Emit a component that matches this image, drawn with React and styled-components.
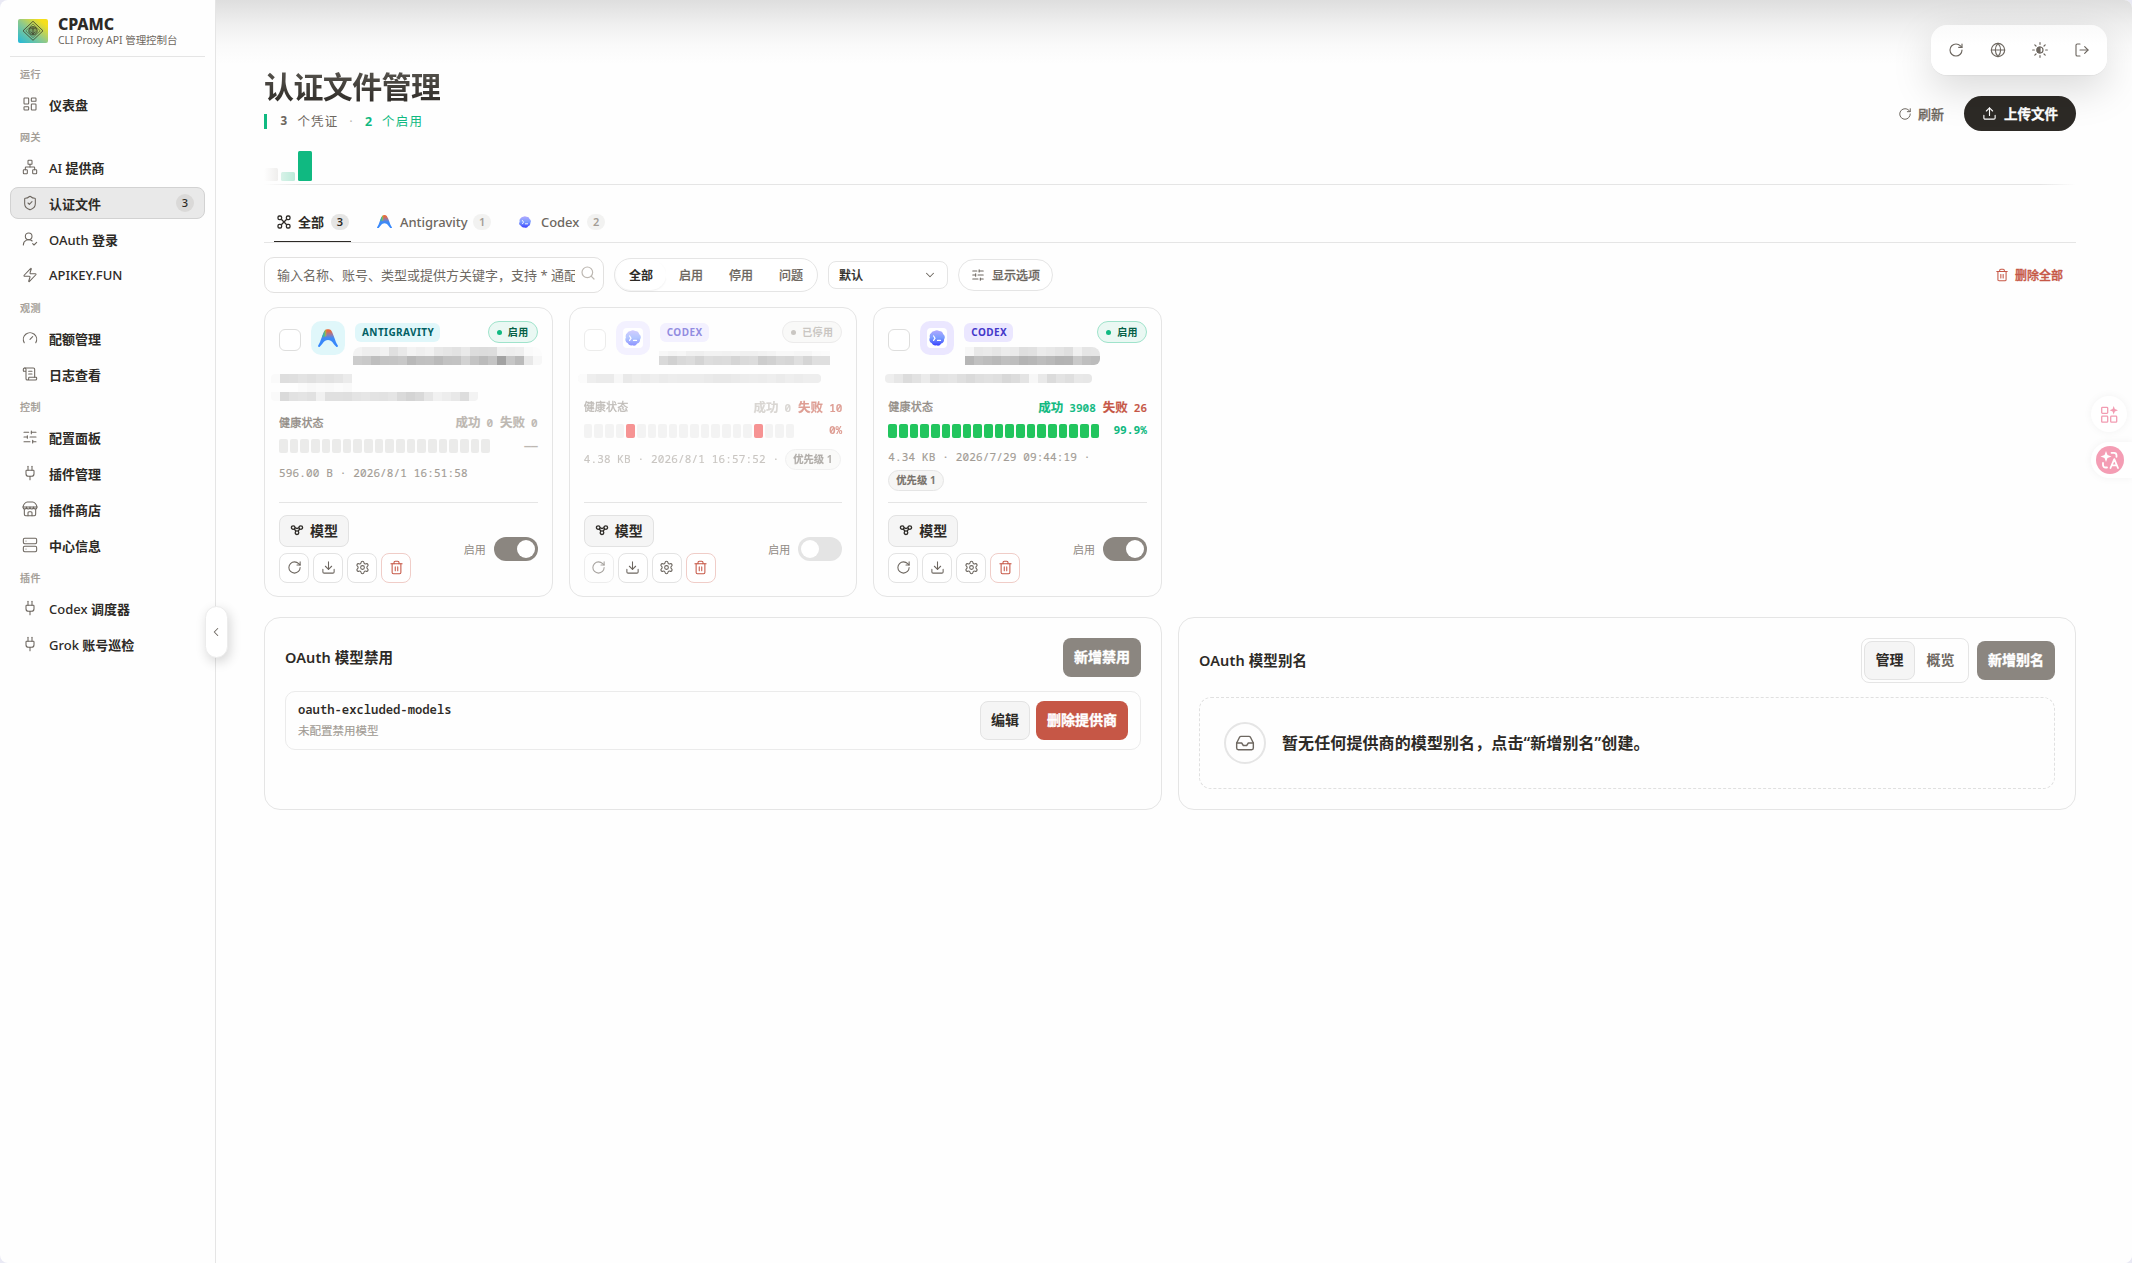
import React, { useState } from 'react';
import styled, { createGlobalStyle, css } from 'styled-components';
import {
    LayoutDashboard, Network, ShieldCheck, UserRoundCheck, Zap, Gauge, ScrollText, SlidersHorizontal,
    Plug, Server, RotateCw, Globe, LogOut, Upload, Download, Settings, Trash2, Search,
    ChevronDown, ChevronLeft, Inbox,
} from 'lucide-react';

const sans = `'Noto Sans', 'Noto Sans CJK SC', sans-serif`;
const mono = `'Noto Sans Mono', 'Noto Sans Mono CJK SC', 'DejaVu Sans Mono', 'Noto Sans CJK SC', monospace`;

const ink = '#2d2a26';
const muted = '#6d6760';
const faint = '#a29c95';
const line = '#e5e5e5';
const green = '#10b981';
const red = '#c65746';

const GlobalStyle = createGlobalStyle`
    * { box-sizing: border-box; }
    body {
        margin: 0;
        background: #e9e9f4;
        color: ${ink};
        font-family: ${sans};
        font-size: 13px;
    }
    button { font-family: inherit; cursor: pointer; margin: 0; }
    svg { display: block; flex-shrink: 0; }
`;

/* ---------- icons ---------- */

const StoreIcon = ({ size = 16 }) => (
    <svg width={size} height={size} viewBox="0 0 24 24" fill="none" stroke="currentColor" strokeWidth="1.6" strokeLinecap="round" strokeLinejoin="round">
        <path d="M1.500 9C2 5 5.500 1.500 8 1.500h8c2.500 0 6 3.500 6.500 7.500z" />
        <path d="M1.500 9c0 4 5.250 4 5.250 0 0 4 5.250 4 5.250 0 0 4 5.250 4 5.250 0 0 4 5.250 4 5.250 0" />
        <path d="M3.500 12.500V20a2 2 0 0 0 2 2h13a2 2 0 0 0 2-2v-7.500" />
        <path d="M9 22v-4.500a1.500 1.500 0 0 1 1.500-1.500h3a1.500 1.500 0 0 1 1.500 1.500V22" />
    </svg>
);

const HalfSunIcon = ({ size = 16 }) => (
    <svg width={size} height={size} viewBox="0 0 24 24" fill="none" stroke="currentColor" strokeWidth="1.8" strokeLinecap="round">
        <circle cx="12" cy="12" r="4.500" />
        <path d="M12 7.500a4.500 4.500 0 0 0 0 9z" fill="currentColor" />
        <path d="M12 1v2.500M12 20.500V23M1 12h2.500M20.500 12H23M4.200 4.200 6 6M18 18l1.800 1.800M4.200 19.800 6 18M18 6l1.800-1.800" />
    </svg>
);

const AllIcon = () => (
    <svg width="14" height="14" viewBox="0 0 14 14" fill="none" stroke="currentColor" strokeWidth="1.300">
        <rect x="1" y="1" width="3.600" height="3.600" rx="1.300" />
        <rect x="9.400" y="1" width="3.600" height="3.600" rx="1.300" />
        <rect x="1" y="9.400" width="3.600" height="3.600" rx="1.300" />
        <rect x="9.400" y="9.400" width="3.600" height="3.600" rx="1.300" />
        <path d="M4.300 4.300 9.700 9.700M9.700 4.300 4.300 9.700" />
    </svg>
);

const ModelIcon = () => (
    <svg width="14" height="14" viewBox="0 0 14 14" fill="none" stroke="currentColor" strokeWidth="1.300">
        <circle cx="3.200" cy="4.600" r="1.800" />
        <circle cx="10.800" cy="4.600" r="1.800" />
        <circle cx="7" cy="9.700" r="1.800" />
        <path d="M5 4.600 7 5.500 9 4.600M4.300 6l1.600 2.200M9.700 6 8.100 8.200" />
    </svg>
);

const AntigravityIcon = ({ width = 20 }) => (
    <svg width={width} height={width * 0.92} viewBox="0 0 20 18.400">
        <defs>
            <linearGradient id="agBase" x1="0" y1="0" x2="0" y2="1">
                <stop offset="0.100" stopColor="#e8683f" />
                <stop offset="0.330" stopColor="#8b7bb0" />
                <stop offset="0.500" stopColor="#3f8af5" />
                <stop offset="1" stopColor="#3186ff" />
            </linearGradient>
            <linearGradient id="agSide" x1="0.150" y1="0.300" x2="0.550" y2="0.300">
                <stop offset="0.200" stopColor="#35b4b0" />
                <stop offset="0.550" stopColor="#8bc34a" stopOpacity="0.900" />
                <stop offset="1" stopColor="#f5a623" stopOpacity="0" />
            </linearGradient>
        </defs>
        <path fill="url(#agBase)" d="M7 1.200C8.200-.2 11.800-.2 13 1.200c2.800 3.900 4 11 6.800 15.300.5.900-.6 2-1.500 1.300-2.800-2.200-4-6.800-8.300-6.800s-5.500 4.600-8.300 6.800c-.9.700-2-.4-1.500-1.300C3 12.200 4.200 5.100 7 1.200z" />
        <path fill="url(#agSide)" d="M7 1.200C8.200-.2 11.800-.2 13 1.200l-.5 5L4 8.200c.8-2.700 1.700-5.200 3-7z" />
    </svg>
);

const CodexIcon = ({ size = 16 }) => (
    <svg width={size} height={size} viewBox="0 0 16 16">
        <defs>
            <linearGradient id="cxFill" x1="0" y1="0" x2="0" y2="1">
                <stop offset="0" stopColor="#b1a7ff" />
                <stop offset="0.500" stopColor="#7a9dff" />
                <stop offset="1" stopColor="#3941ff" />
            </linearGradient>
        </defs>
        <path fill="url(#cxFill)" d="M5.500 1.100a4 4 0 0 1 4.600-.2 4 4 0 0 1 4 3.100 4 4 0 0 1 1 5.300 4 4 0 0 1-2.900 4.200 4 4 0 0 1-5 1.800 4 4 0 0 1-4.600-2.200A4 4 0 0 1 .9 7.500a4 4 0 0 1 1.300-4.400 4 4 0 0 1 3.300-2z" />
        <path d="M4.600 6 6 8.200l-1.400 2.200M8.500 10.400h3" stroke="#fff" strokeWidth="1.200" strokeLinecap="round" fill="none" />
    </svg>
);

const LogoMark = () => (
    <svg width="30" height="24" viewBox="0 0 30 24">
        <defs>
            <linearGradient id="logoBg" x1="0" y1="1" x2="1" y2="0">
                <stop offset="0" stopColor="#1fb8dc" />
                <stop offset="0.480" stopColor="#8fc98a" />
                <stop offset="0.850" stopColor="#f5df1c" />
            </linearGradient>
        </defs>
        <rect width="30" height="24" rx="2" fill="url(#logoBg)" />
        <g fill="none" stroke="#3a3a22" strokeWidth="0.800">
            <path d="M15 2.300 25 11.800 15 21.300 5 11.800z" />
            <path d="M15 5 22.200 11.800 15 18.600 7.800 11.800z" strokeWidth="0.500" />
            <circle cx="15" cy="11.800" r="4.200" fill="#3a3a22" fillOpacity="0.300" />
            <path d="M12 10.300c1-1.500 2-1.500 3 0 1-1.500 2-1.500 3 0M12.500 12.800l2.500 2 2.500-2M15 8v8" strokeWidth="0.700" />
        </g>
    </svg>
);

/* ---------- sidebar ---------- */

const Shell = styled.div`
    position: relative;
    display: flex;
    width: 100%;
    height: 1263px;
    overflow: hidden;
    background: #fefefe;
    border-radius: 8px;
`;

const Sidebar = styled.aside`
    flex: 0 0 216px;
    padding: 0 10px;
    border-right: 1px solid ${line};
`;

const Brand = styled.div`
    display: flex;
    align-items: center;
    gap: 10px;
    height: 57px;
    margin-bottom: 1px;
    padding: 6px 8px 0;
    border-bottom: 1px solid ${line};
`;

const BrandName = styled.div`
    font-size: 16px;
    font-weight: 800;
    line-height: 17px;
    letter-spacing: -0.1px;
`;

const BrandSub = styled.div`
    font-size: 10.5px;
    line-height: 14px;
    letter-spacing: -0.060px;
    color: ${muted};
    white-space: nowrap;
`;

const GroupLabel = styled.div`
    display: flex;
    align-items: center;
    height: 31px;
    padding-left: 10px;
    font-size: 10px;
    font-weight: 500;
    letter-spacing: 0.5px;
    color: ${faint};
    -webkit-text-stroke: 0.2px;
`;

const NavList = styled.nav`
    display: flex;
    flex-direction: column;
    gap: 4px;
    margin: -1px 0 1px;
`;

const NavItem = styled.a`
    display: flex;
    align-items: center;
    height: 32px;
    padding: 0 10px 0 11px;
    border: 1px solid transparent;
    border-radius: 8px;
    font-weight: 500;
    svg { margin-right: 11px; color: ${muted}; }
    ${p => p.$active && css`
        background: #e9e9e9;
        border-color: #d2d2d2;
    `}
`;

const Han = styled.span`
    font-weight: 700;
`;

const NavCount = styled.span`
    width: 18px;
    height: 18px;
    margin-left: auto;
    border-radius: 9px;
    background: #dad9d8;
    font-size: 11px;
    line-height: 18px;
    text-align: center;
`;

const CollapseHandle = styled.button`
    position: absolute;
    left: 205px;
    top: 606px;
    width: 23px;
    height: 52px;
    display: grid;
    place-items: center;
    padding: 0 2px 0 0;
    border: 1px solid #ececec;
    border-radius: 12px;
    background: #fff;
    color: ${muted};
    box-shadow: 2px 4px 12px rgba(0, 0, 0, 0.16);
    z-index: 2;
`;

/* ---------- page header ---------- */

const Main = styled.main`
    flex: 1;
    min-width: 0;
    padding: 70px 56px 0 48px;
    background: linear-gradient(180deg, #dedede 0, #efefef 24px, #fafafa 46px, #fefefe 64px);
`;

const PageHead = styled.header`
    position: relative;
    display: flex;
    justify-content: space-between;
    height: 115px;
    &::after {
        content: '';
        position: absolute;
        left: 0;
        right: 0;
        bottom: 0;
        height: 1px;
        background: linear-gradient(90deg, transparent, ${line} 2%, ${line} 98%, transparent);
    }
`;

const Title = styled.h1`
    margin: -1px 0 0;
    font-size: 30px;
    font-weight: 700;
    line-height: 36px;
    letter-spacing: -0.6px;
    background: linear-gradient(180deg, #58554f, #2d2a26);
    -webkit-background-clip: text;
    color: transparent;
`;

const Summary = styled.div`
    display: flex;
    align-items: center;
    height: 15px;
    margin-top: 9px;
    padding: 0 0 2px 13px;
    border-left: 3px solid ${green};
    font-family: ${mono};
    font-size: 12.5px;
    letter-spacing: 1.200px;
    color: ${muted};
    white-space: pre;
    b { font-weight: 700; }
`;

const SummaryOn = styled.span`
    color: ${green};
`;

const Dot = styled.span`
    color: #bdb8b2;
`;

const MiniBars = styled.div`
    display: flex;
    align-items: flex-end;
    gap: 3px;
    height: 30px;
    margin-top: 22px;
`;

const MiniBar = styled.i`
    width: 14px;
    height: ${p => p.$h}px;
    border-radius: 1.500px;
    background: ${p => p.$bg};
`;

const HeadActions = styled.div`
    display: flex;
    align-items: center;
    gap: 20px;
    height: 35px;
    margin-top: 26px;
`;

const RefreshLink = styled.button`
    display: flex;
    align-items: center;
    gap: 6px;
    padding: 0;
    border: 0;
    background: none;
    font-size: 13px;
    font-weight: 500;
    color: ${muted};
    -webkit-text-stroke: 0.25px;
`;

const UploadButton = styled.button`
    display: flex;
    align-items: center;
    justify-content: center;
    gap: 7px;
    width: 112px;
    height: 35px;
    padding: 0 0 1px;
    border: 0;
    border-radius: 18px;
    background: ${ink};
    color: #fff;
    font-size: 13.500px;
    font-weight: 700;
    -webkit-text-stroke: 0.3px;
`;

const FloatBar = styled.div`
    position: absolute;
    top: 25px;
    right: 25px;
    display: flex;
    align-items: center;
    justify-content: space-between;
    width: 176px;
    height: 50px;
    padding: 0 17px;
    border-radius: 16px;
    background: linear-gradient(180deg, #fafafa, #fff 40%);
    color: ${muted};
    box-shadow: 0 14px 40px rgba(0, 0, 0, 0.15), 0 1px 1px rgba(0, 0, 0, 0.04);
`;

/* ---------- tabs and filters ---------- */

const Tabs = styled.div`
    display: flex;
    height: 58px;
    padding: 17px 10px 0;
    border-bottom: 1px solid ${line};
`;

const Tab = styled.button`
    display: flex;
    align-items: center;
    width: ${p => p.$w}px;
    height: 40px;
    margin-right: 23px;
    padding: 0 2px 0 3px;
    border: 0;
    border-bottom: 1px solid ${p => p.$active ? ink : 'transparent'};
    background: none;
    color: ${p => p.$active ? ink : muted};
    font-size: 13px;
    font-weight: ${p => p.$active ? 700 : 500};
    letter-spacing: ${p => p.$active ? 0 : '-0.05px'};
    svg { margin-right: ${p => p.$gap}px; }
`;

const TabCount = styled.span`
    width: 18px;
    height: 16px;
    margin-left: auto;
    border-radius: 8px;
    background: ${p => p.$active ? '#e5e5e4' : '#f2f2f1'};
    color: ${p => p.$active ? ink : faint};
    font-size: 11px;
    font-weight: 600;
    line-height: 16px;
    text-align: center;
`;

const Filters = styled.div`
    display: flex;
    align-items: center;
    gap: 10px;
    height: 36px;
    margin: 14px 0;
`;

const SearchBox = styled.label`
    display: flex;
    align-items: center;
    width: 340px;
    height: 36px;
    padding: 0 7px 0 12px;
    border: 1px solid #e2e1e0;
    border-radius: 10px;
    background: #fff;
    color: #bdb8b2;
    svg { margin: -4px 0 0 5px; }
`;

const SearchInput = styled.input`
    flex: 1;
    min-width: 0;
    padding: 0;
    border: 0;
    outline: 0;
    background: none;
    font-family: ${sans};
    font-size: 13px;
    &::placeholder { color: #6f6a64; }
`;

const Segment = styled.div`
    display: flex;
    width: 204px;
    height: 34px;
    padding: 1px;
    border: 1px solid ${line};
    border-radius: 17px;
    background: #fff;
`;

const SegmentItem = styled.button`
    flex: 1;
    padding: 0 0 1px;
    border: 0;
    border-radius: 15px;
    background: #fff;
    color: ${p => p.$active ? ink : muted};
    font-size: 12px;
    font-weight: ${p => p.$active ? 700 : 500};
    -webkit-text-stroke: ${p => p.$active ? 0 : 0.2}px;
    ${p => p.$active && css`box-shadow: 0 1px 2px rgba(0, 0, 0, 0.06);`}
`;

const SortSelect = styled.button`
    display: flex;
    align-items: center;
    justify-content: space-between;
    width: 120px;
    height: 28px;
    padding: 0 10px;
    border: 1px solid ${line};
    border-radius: 8px;
    background: #fff;
    color: ${ink};
    font-size: 12px;
    font-weight: 500;
    -webkit-text-stroke: 0.2px;
    svg { color: ${muted}; }
`;

const OptionsButton = styled.button`
    display: flex;
    align-items: center;
    justify-content: center;
    gap: 7px;
    width: 95px;
    height: 32px;
    padding: 0;
    border: 1px solid ${line};
    border-radius: 16px;
    background: #fff;
    color: ${muted};
    font-size: 12px;
    font-weight: 500;
    -webkit-text-stroke: 0.25px;
`;

const DeleteAll = styled.button`
    display: flex;
    align-items: center;
    gap: 6px;
    margin-left: auto;
    padding: 0 13px 0 0;
    border: 0;
    background: none;
    color: ${red};
    font-size: 12px;
    font-weight: 500;
    -webkit-text-stroke: 0.35px;
`;

/* ---------- credential cards ---------- */

const CardGrid = styled.section`
    display: grid;
    grid-template-columns: repeat(6, minmax(0, 1fr));
    gap: 16px;
`;

const Card = styled.article`
    display: flex;
    flex-direction: column;
    height: 290px;
    padding: 13px 14px;
    border: 1px solid ${line};
    border-radius: 14px;
    background: #fefefe;
`;

const Fade = styled.div`
    opacity: ${p => p.$off ? 0.58 : 1};
`;

const CardTop = styled.div`
    display: flex;
    height: 53px;
`;

const CheckBox = styled.span`
    width: 22px;
    height: 22px;
    margin: 8px 10px 0 0;
    border: 1px solid #dededd;
    border-radius: 6px;
    background: #fff;
`;

const Avatar = styled.span`
    display: grid;
    place-items: center;
    width: 34px;
    height: 34px;
    margin-right: 10px;
    border-radius: 10px;
    background: ${p => p.$bg};
`;

const AvatarInner = styled.span`
    display: grid;
    place-items: center;
    width: 20px;
    height: 20px;
    border-radius: 4px;
    background: #fff;
`;

const CardIdent = styled.div`
    flex: 1;
    min-width: 0;
`;

const BadgeRow = styled.div`
    display: flex;
    align-items: center;
    justify-content: space-between;
    height: 22px;
    margin-bottom: 4px;
`;

const TypeBadge = styled.span`
    height: 19px;
    padding: 0 6px 0 7px;
    border-radius: 6px;
    background: ${p => p.$bg};
    color: ${p => p.$fg};
    font-size: 10px;
    font-weight: 700;
    line-height: 19px;
    letter-spacing: 0.430px;
`;

const StatusPill = styled.span`
    display: flex;
    align-items: center;
    gap: 6px;
    height: 22px;
    padding: 0 8px 1px;
    border: 1px solid ${p => p.$on ? '#9fe3cb' : '#dedddc'};
    border-radius: 11px;
    background: ${p => p.$on ? '#eaf8f3' : '#f4f4f3'};
    color: ${p => p.$on ? '#065f46' : faint};
    font-size: 10px;
    font-weight: 700;
    letter-spacing: 0.400px;
    &::before {
        content: '';
        width: 5px;
        height: 5px;
        margin-top: 1px;
        border-radius: 50%;
        background: ${p => p.$on ? green : faint};
    }
`;

const FileLines = styled.div`
    height: ${p => p.$h}px;
    margin-left: ${p => p.$shift}px;
`;

const MaskSvg = styled.svg`
    border-radius: ${p => p.$round};
    overflow: hidden;
`;

const HealthRow = styled.div`
    display: flex;
    align-items: center;
    justify-content: space-between;
    height: 18px;
    margin-bottom: 7.500px;
    padding-bottom: 2px;
    font-family: ${mono};
    font-size: 11px;
    white-space: pre;
`;

const HealthLabel = styled.span`
    color: #918b84;
    font-weight: 500;
    letter-spacing: 0.200px;
    -webkit-text-stroke: 0.3px;
`;

const Stat = styled.span`
    margin-left: 7px;
    color: ${p => p.$color};
    font-weight: 600;
    -webkit-text-stroke: 0.15px;
    span { font-family: ${sans}; font-size: 12.500px; margin-right: 6px; }
`;

const BarsRow = styled.div`
    display: grid;
    grid-template-columns: 1fr 48px;
    align-items: center;
    height: 14px;
`;

const Bars = styled.div`
    display: flex;
    gap: 2px;
    height: 14px;
`;

const Bar = styled.i`
    flex: 1;
    border-radius: 2px;
    background: ${p => p.$color};
`;

const Rate = styled.span`
    margin-top: -2px;
    font-family: ${mono};
    font-size: 11.200px;
    font-weight: 700;
    line-height: 14px;
    text-align: right;
    color: ${p => p.$color};
`;

const Meta = styled.div`
    display: flex;
    flex-wrap: wrap;
    align-items: center;
    gap: 5px 6px;
    margin-top: ${p => p.$single ? 12 : 11}px;
    font-family: ${mono};
    font-size: 11px;
    line-height: 16px;
    letter-spacing: 0.140px;
    color: ${faint};
    white-space: nowrap;
    -webkit-text-stroke: 0.15px;
`;

const Priority = styled.span`
    height: 21px;
    padding: 0 7px;
    border: 1px solid ${line};
    border-radius: 11px;
    background: #f6f6f5;
    color: #78726b;
    font-family: ${sans};
    font-size: 10.300px;
    font-weight: 600;
    line-height: 18px;
    letter-spacing: 0;
`;

const CardFoot = styled.div`
    display: flex;
    align-items: center;
    justify-content: space-between;
    margin-top: auto;
    padding-top: 12px;
    border-top: 1px solid ${line};
`;

const ModelButton = styled.button`
    display: flex;
    align-items: center;
    justify-content: center;
    gap: 6px;
    width: 70px;
    height: 32px;
    margin-bottom: 6px;
    padding: 0 0 2px;
    border: 1px solid #e2e2e2;
    border-radius: 8px;
    background: #f5f5f5;
    color: ${ink};
    font-size: 14px;
    font-weight: 700;
`;

const IconRow = styled.div`
    display: flex;
    gap: 4px;
`;

const IconButton = styled.button`
    display: grid;
    place-items: center;
    width: 30px;
    height: 30px;
    padding: 0 0 1px;
    border: 1px solid ${p => p.$danger ? '#f0cdc8' : '#e3e3e3'};
    border-radius: 8px;
    background: #fff;
    color: ${p => p.$danger ? red : muted};
    opacity: ${p => p.disabled ? 0.6 : 1};
`;

const SwitchLabel = styled.div`
    display: flex;
    align-items: center;
    color: #918b84;
    font-size: 11px;
    span:first-child { padding: 0 8px 1px 0; }
`;

const Switch = styled.span`
    display: flex;
    justify-content: ${p => p.$on ? 'flex-end' : 'flex-start'};
    width: 44px;
    height: 24px;
    padding: 3px;
    border-radius: 12px;
    background: ${p => p.$on ? '#8b8680' : '#e4e4e4'};
    &::after {
        content: '';
        width: 18px;
        height: 18px;
        border-radius: 50%;
        background: #fff;
    }
`;

/* ---------- oauth panels ---------- */

const Panels = styled.section`
    display: grid;
    grid-template-columns: 1fr 1fr;
    gap: 16px;
    margin-top: 20px;
`;

const Panel = styled.div`
    height: 193px;
    padding: 20px;
    border: 1px solid ${line};
    border-radius: 16px;
`;

const PanelHead = styled.div`
    display: flex;
    align-items: center;
    gap: 8px;
    height: ${p => p.$h}px;
    margin-bottom: 14px;
    h2 {
        flex: 1;
        margin: -2px 0 0;
        font-size: 14.500px;
        font-weight: 600;
        letter-spacing: 0.120px;
    }
`;

const solid = css`
    border-color: transparent;
    color: #fff;
    -webkit-text-stroke: 0.35px;
`;

const Button = styled.button`
    height: 39px;
    padding: 0 10px 1px;
    border: 1px solid #e3e3e3;
    border-radius: 8px;
    background: #f5f5f5;
    background-origin: border-box;
    color: ${ink};
    font-size: 14px;
    font-weight: 600;
    line-height: 20px;
    white-space: nowrap;
    ${p => p.$kind === 'primary' && css`${solid} background: #8b8680;`}
    ${p => p.$kind === 'danger' && css`${solid} background: ${red};`}
    ${p => p.$kind === 'ghost' && css`border-color: transparent; background: none; color: ${muted};`}
`;

const ExcludedRow = styled.div`
    display: flex;
    align-items: center;
    gap: 6px;
    height: 59px;
    padding: 0 12px;
    border: 1px solid #ebebeb;
    border-radius: 10px;
`;

const ExcludedText = styled.div`
    flex: 1;
    margin-top: -2px;
    strong {
        display: block;
        font-family: ${mono};
        font-size: 12.200px;
        font-weight: 600;
        line-height: 18px;
        margin-bottom: 4px;
    }
    span {
        display: block;
        color: ${faint};
        font-size: 11.500px;
        line-height: 16px;
        -webkit-text-stroke: 0.15px;
    }
`;

const ViewSwitch = styled.div`
    display: flex;
    width: 108px;
    height: 45px;
    padding: 2px;
    border: 1px solid ${line};
    border-radius: 8px;
    button { flex: 1; padding: 0 0 1px; }
`;

const EmptyBox = styled.div`
    display: flex;
    align-items: center;
    gap: 16px;
    height: 92px;
    padding-left: 24px;
    border: 1px dashed #e0e0e0;
    border-radius: 12px;
    font-size: 16px;
    font-weight: 600;
    letter-spacing: 0.1px;
    p { margin: -2px 0 0; }
`;

const EmptyIcon = styled.span`
    display: grid;
    place-items: center;
    width: 42px;
    height: 42px;
    border: 2px solid #e5e5e5;
    border-radius: 50%;
    color: ${muted};
`;

/* ---------- right edge helpers ---------- */

const EdgeTools = styled.div`
    position: absolute;
    top: 396px;
    right: 0;
    display: flex;
    flex-direction: column;
    gap: 10px;
    width: 41px;
`;

const EdgeBubble = styled.span`
    display: flex;
    align-items: center;
    width: ${p => p.$w}px;
    height: 36px;
    padding-left: ${p => p.$pl}px;
    border-radius: ${p => p.$round};
    background: #fff;
    box-shadow: 0 0 8px rgba(0, 0, 0, 0.05);
`;

/* masked account text, one grey level per 9px cell */
const Mask = ({ rows, clip = 0, round = '0' }) => {
    const cols = Math.max(...rows.map(row => row.split(' ').length));
    return (
        <MaskSvg width={cols * 9} height={rows.length * 9} $round={round} shapeRendering="crispEdges">
            {rows.map((row, y) => row.split(' ').map((v, x) => {
                const cut = y === 0 ? clip : 0;
                if (v === '..') return null;
                return <rect key={`${x}-${y}`} x={x * 9} y={y * 9 + cut} width="9" height={9 - cut} fill={`#${v}${v}${v}`} />;
            }))}
        </MaskSvg>
    );
};

const navGroups = [
    { label: '运行', items: [{ icon: LayoutDashboard, han: '仪表盘' }] },
    {
        label: '网关', items: [
            { icon: Network, latin: 'AI ', han: '提供商' },
            { icon: ShieldCheck, han: '认证文件', count: 3 },
            { icon: UserRoundCheck, latin: 'OAuth ', han: '登录' },
            { icon: Zap, latin: 'APIKEY.FUN' },
        ],
    },
    { label: '观测', items: [{ icon: Gauge, han: '配额管理' }, { icon: ScrollText, han: '日志查看' }] },
    {
        label: '控制', items: [
            { icon: SlidersHorizontal, han: '配置面板' },
            { icon: Plug, han: '插件管理' },
            { icon: StoreIcon, han: '插件商店' },
            { icon: Server, han: '中心信息' },
        ],
    },
    { label: '插件', items: [{ icon: Plug, latin: 'Codex ', han: '调度器' }, { icon: Plug, latin: 'Grok ', han: '账号巡检' }] },
];

const cards = [
    {
        type: 'ANTIGRAVITY', bg: '#e0f7fa', fg: '#006064', on: true, enabled: '启用',
        nameMask: ['f3 ee ee f2 e0 e9 f3 ef f2 e8 e5 e2 e9 dd dc dd ef ed ef fa fc', 'cc c9 be c4 c5 c8 b9 c0 c1 ba c2 c3 d2 c4 bb c4 a2 c6 ba e8 f7'],
        nameShift: -2, round: '8px 8px 3px 0',
        lines: ['fa de df e3 e0 e4 e2 e5 eb', '.. .. .. fb f8 fa f9 fb f9', 'fa da e2 e4 e1 f1 e0 e0 df e4 e6 e3 e2 e5 da d4 d9 e6 f1 ed e8 dd f3'],
        linesH: 39.7, linesShift: -8,
        ok: 0, fail: 0, rate: '——', size: '596.00 B', date: '2026/8/1 16:51:58',
    },
    {
        type: 'CODEX', bg: '#ebe7ff', fg: '#4338ca', on: false, enabled: '已停用',
        nameMask: ['f1 ec f0 e5 e4 e8 e8 e7 e9 e6 e6 e8 ec f3 f3 f0 f0 f6 f8', 'bd b0 bd c2 b5 c5 c0 c2 b6 bf c2 a9 af bb b8 c7 b6 c8 c8'],
        nameShift: -1, clip: 4, round: '0',
        lines: ['f8 e1 dd dc f2 d9 e0 dc e2 dd e0 de df de db d8 d7 da df e0 de e2 dd e1 de e2 e1'],
        linesH: 24.3, linesShift: -6,
        ok: 0, fail: 10, rate: '0%', size: '4.38 KB', date: '2026/8/1 16:57:52', priority: 1, bad: [4, 16],
    },
    {
        type: 'CODEX', bg: '#ebe7ff', fg: '#4338ca', on: true, enabled: '启用',
        nameMask: ['f7 e8 ea e6 ec ea df e1 eb e8 e4 df f0 e5 e6', 'b6 c1 bd b9 c0 be b4 b7 bd b9 b3 b4 c9 bf bc'],
        nameShift: 1, round: '0 8px 6px 0',
        lines: ['ee e7 dc e2 eb df e3 e5 df da df e1 df d8 dc e4 f7 e9 db e3 df e8 e7'],
        linesH: 24.3, linesShift: -3,
        ok: 3908, fail: 26, rate: '99.9%', size: '4.34 KB', date: '2026/7/29 09:44:19', priority: 1,
    },
];

const CredentialCard = ({ card }) => {
    const isCodex = card.type === 'CODEX';
    const healthy = card.ok > 0;
    const barColor = (i) => {
        if (healthy) return '#22c55e';
        if (card.bad && card.bad.includes(i)) return '#ef4444';
        return '#ebebea';
    };
    const okColor = healthy ? green : '#bdb8b2';
    const failColor = card.fail ? red : '#bdb8b2';

    return (
        <Card>
            <Fade $off={!card.on}>
                <CardTop>
                    <CheckBox />
                    <Avatar $bg={card.bg}>
                        {isCodex ? <AvatarInner><CodexIcon /></AvatarInner> : <AntigravityIcon />}
                    </Avatar>
                    <CardIdent>
                        <BadgeRow>
                            <TypeBadge $bg={card.bg} $fg={card.fg}>{card.type}</TypeBadge>
                            <StatusPill $on={card.on}>{card.enabled}</StatusPill>
                        </BadgeRow>
                        <FileLines $h={18} $shift={card.nameShift}>
                            <Mask rows={card.nameMask} clip={card.clip} round={card.round} />
                        </FileLines>
                    </CardIdent>
                </CardTop>
                <FileLines $h={card.linesH} $shift={card.linesShift}>
                    <Mask rows={card.lines} round="4px" />
                </FileLines>
                <HealthRow>
                    <HealthLabel>健康状态</HealthLabel>
                    <div>
                        <Stat $color={okColor}><span>成功</span>{card.ok}</Stat>
                        <Stat $color={failColor}><span>失败</span>{card.fail}</Stat>
                    </div>
                </HealthRow>
                <BarsRow>
                    <Bars>
                        {Array.from({ length: 20 }, (_, i) => <Bar key={i} $color={barColor(i)} />)}
                    </Bars>
                    <Rate $color={healthy ? green : failColor}>{card.rate}</Rate>
                </BarsRow>
                <Meta $single={!card.priority}>
                    <span>{card.size} · {card.date}{card.priority ? ' ·' : ''}</span>
                    {card.priority && <Priority>优先级 {card.priority}</Priority>}
                </Meta>
            </Fade>
            <CardFoot>
                <div>
                    <ModelButton><ModelIcon />模型</ModelButton>
                    <IconRow>
                        <IconButton disabled={!card.on}><RotateCw size={15} strokeWidth={1.700} /></IconButton>
                        <IconButton><Download size={15} strokeWidth={1.700} /></IconButton>
                        <IconButton><Settings size={15} strokeWidth={1.700} /></IconButton>
                        <IconButton $danger><Trash2 size={15} strokeWidth={1.700} /></IconButton>
                    </IconRow>
                </div>
                <SwitchLabel><span>启用</span><Switch $on={card.on} /></SwitchLabel>
            </CardFoot>
        </Card>
    );
};

const App = () => {
    const [active, setActive] = useState('认证文件');
    const [filter, setFilter] = useState('全部');

    return (
        <>
            <GlobalStyle />
            <Shell>
                <Sidebar>
                    <Brand>
                        <LogoMark />
                        <div>
                            <BrandName>CPAMC</BrandName>
                            <BrandSub>CLI Proxy API 管理控制台</BrandSub>
                        </div>
                    </Brand>
                    {navGroups.map((group, i) => (
                        <React.Fragment key={i}>
                            <GroupLabel>{group.label}</GroupLabel>
                            <NavList>
                                {group.items.map(({ icon: Icon, latin, han, count }) => (
                                    <NavItem key={han || latin} $active={active === han} onClick={() => setActive(han)}>
                                        <Icon size={16} strokeWidth={1.600} />
                                        <span>{latin}<Han>{han}</Han></span>
                                        {count && <NavCount>{count}</NavCount>}
                                    </NavItem>
                                ))}
                            </NavList>
                        </React.Fragment>
                    ))}
                </Sidebar>
                <CollapseHandle><ChevronLeft size={14} strokeWidth={1.800} /></CollapseHandle>

                <Main>
                    <PageHead>
                        <div>
                            <Title>认证文件管理</Title>
                            <Summary>
                                <b>3</b> 个凭证<Dot> · </Dot><SummaryOn><b>2</b> 个启用</SummaryOn>
                            </Summary>
                            <MiniBars>
                                <MiniBar $h={13} $bg="linear-gradient(90deg, #fefefe, #efeeed)" />
                                <MiniBar $h={9} $bg="linear-gradient(90deg, #d8f2e8, #bcebda)" />
                                <MiniBar $h={30} $bg={green} />
                            </MiniBars>
                        </div>
                        <HeadActions>
                            <RefreshLink><RotateCw size={14} strokeWidth={1.700} />刷新</RefreshLink>
                            <UploadButton><Upload size={15} strokeWidth={1.800} />上传文件</UploadButton>
                        </HeadActions>
                    </PageHead>

                    <Tabs>
                        <Tab $active $w={77} $gap={7}><AllIcon />全部<TabCount $active>3</TabCount></Tab>
                        <Tab $w={119} $gap={8}><AntigravityIcon width={15} />Antigravity<TabCount>1</TabCount></Tab>
                        <Tab $w={91} $gap={10}><CodexIcon size={12} />Codex<TabCount>2</TabCount></Tab>
                    </Tabs>

                    <Filters>
                        <SearchBox>
                            <SearchInput placeholder="输入名称、账号、类型或提供方关键字，支持 * 通配" />
                            <Search size={16} strokeWidth={1.800} />
                        </SearchBox>
                        <Segment>
                            {['全部', '启用', '停用', '问题'].map(name => (
                                <SegmentItem key={name} $active={filter === name} onClick={() => setFilter(name)}>{name}</SegmentItem>
                            ))}
                        </Segment>
                        <SortSelect>默认<ChevronDown size={14} strokeWidth={1.800} /></SortSelect>
                        <OptionsButton><SlidersHorizontal size={14} strokeWidth={1.800} />显示选项</OptionsButton>
                        <DeleteAll><Trash2 size={14} strokeWidth={1.800} />删除全部</DeleteAll>
                    </Filters>

                    <CardGrid>
                        {cards.map((card, i) => <CredentialCard key={i} card={card} />)}
                    </CardGrid>

                    <Panels>
                        <Panel>
                            <PanelHead $h={39}>
                                <h2>OAuth 模型禁用</h2>
                                <Button $kind="primary">新增禁用</Button>
                            </PanelHead>
                            <ExcludedRow>
                                <ExcludedText>
                                    <strong>oauth-excluded-models</strong>
                                    <span>未配置禁用模型</span>
                                </ExcludedText>
                                <Button>编辑</Button>
                                <Button $kind="danger">删除提供商</Button>
                            </ExcludedRow>
                        </Panel>
                        <Panel>
                            <PanelHead $h={45}>
                                <h2>OAuth 模型别名</h2>
                                <ViewSwitch>
                                    <Button>管理</Button>
                                    <Button $kind="ghost">概览</Button>
                                </ViewSwitch>
                                <Button $kind="primary">新增别名</Button>
                            </PanelHead>
                            <EmptyBox>
                                <EmptyIcon><Inbox size={20} strokeWidth={1.700} /></EmptyIcon>
                                <p>暂无任何提供商的模型别名，点击“新增别名”创建。</p>
                            </EmptyBox>
                        </Panel>
                    </Panels>
                </Main>

                <FloatBar>
                    <RotateCw size={16} strokeWidth={1.700} />
                    <Globe size={16} strokeWidth={1.700} />
                    <HalfSunIcon />
                    <LogOut size={16} strokeWidth={1.700} />
                </FloatBar>

                <EdgeTools>
                    <EdgeBubble $w={36} $pl={10} $round="18px">
                        <svg width="17" height="17" viewBox="0 0 17 17" fill="none" stroke="#f29cb2" strokeWidth="1.300">
                            <rect x="0.700" y="1.300" width="6" height="6" rx="0.800" />
                            <rect x="0.700" y="10.200" width="6" height="6" rx="0.800" />
                            <rect x="9.700" y="10.200" width="6" height="6" rx="0.800" />
                            <path d="M12.700 0 13.800 3 17 4.200 13.800 5.400 12.700 8.400 11.600 5.400 8.600 4.200 11.600 3z" fill="#f29cb2" stroke="none" />
                        </svg>
                    </EdgeBubble>
                    <EdgeBubble $w={41} $pl={5} $round="18px 0 0 18px">
                        <svg width="28" height="28" viewBox="0 0 28 28" fill="none" stroke="#fff" strokeWidth="1.800" strokeLinecap="round" strokeLinejoin="round">
                            <circle cx="14" cy="14" r="14" fill="#f49db4" stroke="none" />
                            <path d="M10 5 11.500 9 15.500 10.500 11.500 12 10 16 8.500 12 4.500 10.500 8.500 9z" fill="#fff" stroke="none" />
                            <path d="M15.500 6.800h2.500a2.500 2.500 0 0 1 2.500 2.500v1.500M7 17v2a2.500 2.500 0 0 0 2.500 2.500H11" />
                            <path d="M14.500 22 18.300 13.200 22 22M15.800 19.300h5" />
                        </svg>
                    </EdgeBubble>
                </EdgeTools>
            </Shell>
        </>
    );
};

export default App;
